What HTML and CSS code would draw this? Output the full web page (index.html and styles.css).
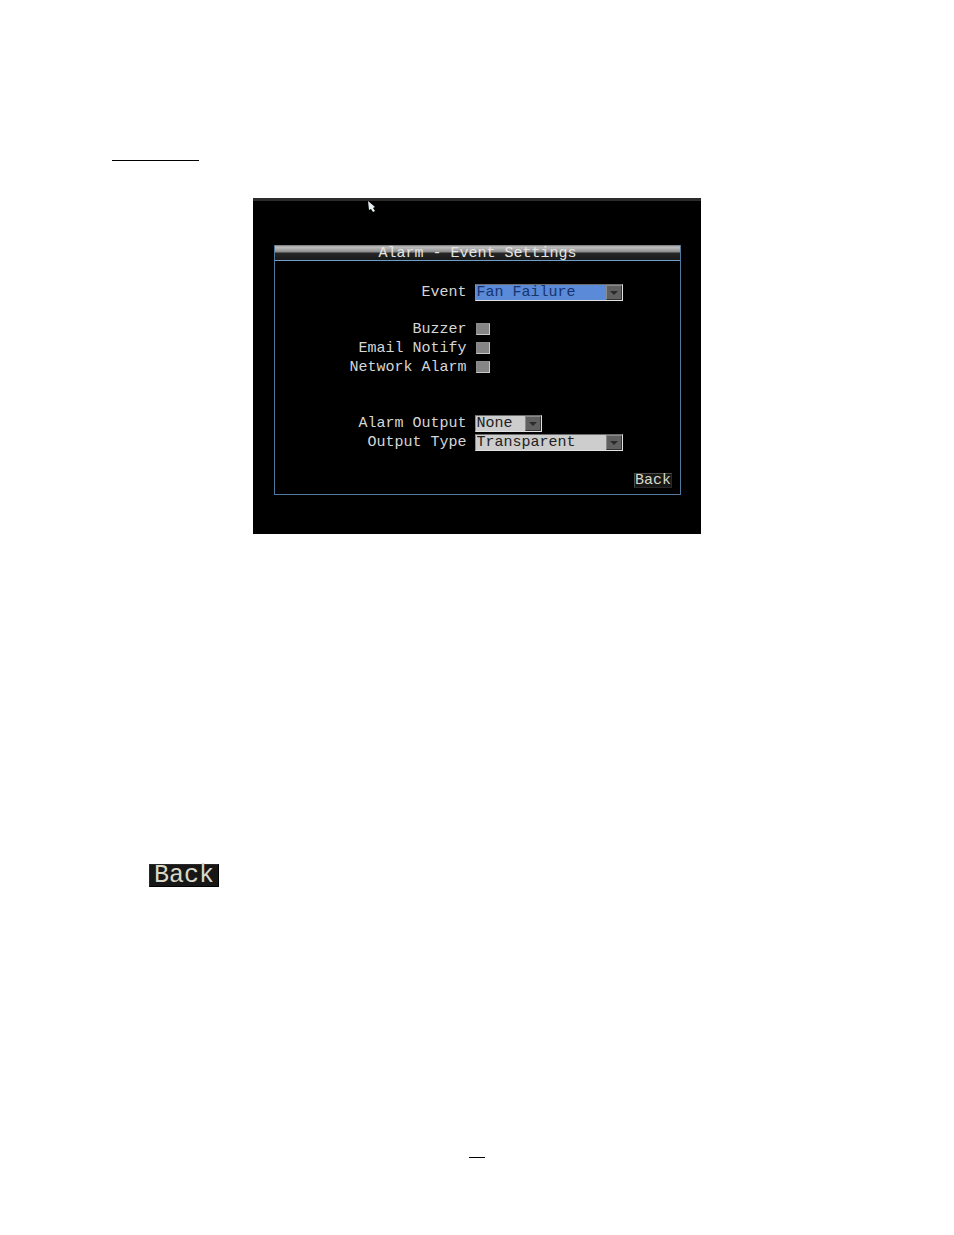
FILE: index.html
```
<!DOCTYPE html>
<html lang="en">

<head>
  <meta charset="UTF-8">
  <meta name="viewport" content="width=device-width, initial-scale=1.0">
  <title>Alarm - Event Settings</title>
  <link rel="stylesheet" href="styles.css">
</head>

<body>
  <main class="page">
    <hr class="heading-rule">

    <section class="screen">
      <svg class="cursor" width="8" height="12" viewBox="0 0 8 12" aria-hidden="true">
        <path d="M0 0 L7 6 L5 7 L7 10 L5 11 L3 8 L1 9 Z" fill="#e4eef0" />
      </svg>

      <form class="panel">
        <h1 class="panel-title">Alarm - Event Settings</h1>

        <div class="fields">
          <label for="event">Event</label>
          <span class="select wide active">
            <select id="event">
              <option>Fan Failure</option>
            </select>
            <svg class="arrow" viewBox="0 0 14 13" aria-hidden="true">
              <path d="M3 5 H11 L7 9 Z" />
            </svg>
          </span>

          <label class="group-start" for="buzzer">Buzzer</label>
          <input class="group-start" type="checkbox" id="buzzer">

          <label for="email">Email Notify</label>
          <input type="checkbox" id="email">

          <label for="network">Network Alarm</label>
          <input type="checkbox" id="network">

          <label class="output-start" for="output">Alarm Output</label>
          <span class="select narrow output-start">
            <select id="output">
              <option>None</option>
            </select>
            <svg class="arrow" viewBox="0 0 14 13" aria-hidden="true">
              <path d="M3 5 H11 L7 9 Z" />
            </svg>
          </span>

          <label for="type">Output Type</label>
          <span class="select wide">
            <select id="type">
              <option>Transparent</option>
            </select>
            <svg class="arrow" viewBox="0 0 14 13" aria-hidden="true">
              <path d="M3 5 H11 L7 9 Z" />
            </svg>
          </span>
        </div>

        <button class="back" type="button">Back</button>
      </form>
    </section>

    <button class="back back-large" type="button">Back</button>

    <hr class="page-rule">
  </main>
</body>

</html>
```
FILE: styles.css
```
* {
  box-sizing: border-box;
}

body {
  margin: 0;
  background: #fff;
  font-family: "Liberation Mono", "Courier New", monospace;
  font-size: 15px;
}

.page {
  display: flex;
  flex-direction: column;
  padding: 160px 112px 77px;
}

hr {
  height: 1px;
  border: 0;
  background: #000;
}

.heading-rule {
  width: 87px;
  margin: 0;
}

.screen {
  position: relative;
  width: 100%;
  max-width: 448px;
  margin: 37px auto 0;
  padding: 44px 20px 39px 21px;
  border-top: 3px solid #2c2c2c;
  background: #000;
}

/* mouse pointer over the screen */
.cursor {
  position: absolute;
  top: 0;
  left: 115px;
}

.panel {
  display: flex;
  flex-direction: column;
  border: 1px solid #52789c;
  border-top: 0;
  color: #d6d6d6;
}

.panel-title {
  height: 16px;
  margin: 0;
  border-bottom: 1px solid #6fa0cc;
  background: linear-gradient(#707070 0, #c0c0c0 2px, #8c8c8c 7px, #262626 8px, #1a1a1a 100%);
  color: #e4e4e4;
  font-size: 15px;
  font-weight: normal;
  line-height: 18px;
  text-align: center;
}

.fields {
  display: grid;
  grid-template-columns: 12fr 13fr;
  gap: 2px 8px;
  padding: 23px 0 0 2px;
}

.fields label {
  line-height: 17px;
  text-align: right;
}

.fields .group-start {
  margin-top: 18px;
}

.fields .output-start {
  margin-top: 37px;
}

.select {
  position: relative;
  height: 17px;
}

.wide {
  width: 148px;
}

.narrow {
  width: 67px;
}

select {
  display: block;
  width: 100%;
  height: 17px;
  padding: 0 18px 0 1px;
  border: 1px solid #e2e2e2;
  border-top-color: #6c6c6c;
  border-left-color: #8c8c8c;
  border-radius: 0;
  appearance: none;
  background: #cdcdcd;
  color: #222;
  font: inherit;
  line-height: 15px;
}

.active select {
  background: #5a8ad8;
  color: #17356e;
}

.arrow {
  position: absolute;
  top: 1px;
  right: 1px;
  width: 16px;
  height: 15px;
  border: 1px solid #333;
  border-top-color: #8a8a8a;
  border-left-color: #8a8a8a;
  background: #606060;
  fill: #2b2b2b;
  pointer-events: none;
}

input[type="checkbox"] {
  width: 14px;
  height: 12px;
  margin: 2px 0 0 1px;
  border: 1px solid #8c8c8c;
  border-right-color: #c8c8c8;
  border-bottom-color: #c8c8c8;
  border-radius: 0;
  appearance: none;
  background: #858585;
}

input[type="checkbox"].group-start {
  margin-top: 20px;
}

input[type="checkbox"]:checked {
  background: #5a8ad8;
}

.back {
  align-self: flex-end;
  height: 15px;
  margin: 22px 8px 6px 0;
  padding: 0;
  border: 1px solid #292929;
  border-top-color: #4a4a46;
  border-left-color: #4a4a46;
  background: #171717;
  color: #d8d8c8;
  font: inherit;
  line-height: 13px;
}

.back-large {
  align-self: flex-start;
  height: 23px;
  margin: 330px 0 0 37px;
  padding: 0 4px;
  border-color: #292929 #000 #000 #292929;
  font-size: 25px;
  line-height: 21px;
}

.page-rule {
  width: 16px;
  margin: 270px auto 0;
}
```
